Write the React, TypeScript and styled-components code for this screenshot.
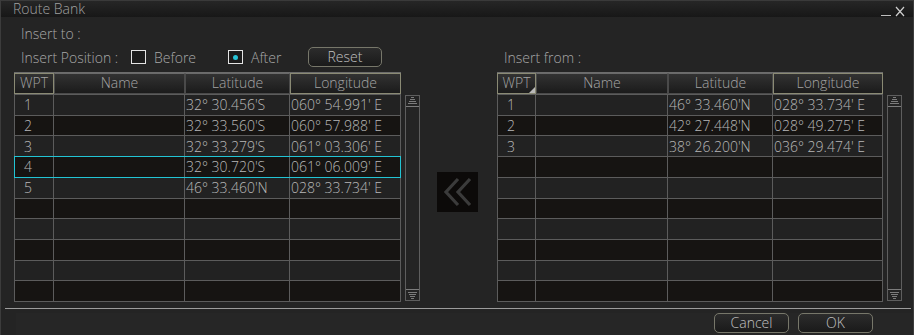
import React from "react";
import styled, { createGlobalStyle } from "styled-components";

const GlobalStyle = createGlobalStyle`
  html, body {
    margin: 0;
    padding: 0;
    background: #1a1a1a;
  }
  body {
    font-family: "Open Sans", "Noto Sans", sans-serif;
  }
`;

type Waypoint = { wpt: number; name: string; lat: string; lon: string };

const targetRoute: Waypoint[] = [
  { wpt: 1, name: "", lat: "32° 30.456'S", lon: "060° 54.991' E" },
  { wpt: 2, name: "", lat: "32° 33.560'S", lon: "060° 57.988' E" },
  { wpt: 3, name: "", lat: "32° 33.279'S", lon: "061° 03.306' E" },
  { wpt: 4, name: "", lat: "32° 30.720'S", lon: "061° 06.009' E" },
  { wpt: 5, name: "", lat: "46° 33.460'N", lon: "028° 33.734' E" },
];

const sourceRoute: Waypoint[] = [
  { wpt: 1, name: "", lat: "46° 33.460'N", lon: "028° 33.734' E" },
  { wpt: 2, name: "", lat: "42° 27.448'N", lon: "028° 49.275' E" },
  { wpt: 3, name: "", lat: "38° 26.200'N", lon: "036° 29.474' E" },
];

const ROWS = 10;

const Window = styled.div`
  width: 914px;
  height: 335px;
  box-sizing: border-box;
  background: #242424;
  border-left: 1px solid #3c3c3c;
  border-right: 1px solid #3c3c3c;
  display: flex;
  flex-direction: column;
  color: #ababab;
  font-size: 14px;
  font-weight: 300;
`;

const TitleBar = styled.div`
  height: 17px;
  flex-shrink: 0;
  display: flex;
  align-items: center;
  justify-content: space-between;
  padding: 0 8px 0 12px;
  background: linear-gradient(#262626, #171717);
  border-top: 1px solid #3a3a3a;
  box-sizing: border-box;
`;

const Title = styled.span`
  color: #a0a0a0;
  font-size: 14px;
  line-height: 16px;
`;

const WinControls = styled.div`
  display: flex;
  align-items: flex-end;
  gap: 4px;
  height: 16px;
`;

const Content = styled.div`
  display: flex;
  align-items: flex-end;
  padding: 8px 0 0 13px;
`;

const Side = styled.div`
  display: flex;
  flex-direction: column;
`;

const Label = styled.div`
  height: 18px;
  line-height: 18px;
  padding-left: 7px;
  color: #a8a8a8;
  white-space: nowrap;
`;

const PositionRow = styled.div`
  display: flex;
  align-items: center;
  height: 20px;
  margin-top: 4px;
  padding-left: 7px;
  color: #a8a8a8;
  white-space: nowrap;
`;

const RowCaption = styled.span`
  width: 110px;
`;

const Check = styled.span<{ $checked?: boolean }>`
  width: 15px;
  height: 14px;
  box-sizing: border-box;
  border: 1px solid #e4e4e4;
  background: #1c1c1c;
  display: inline-flex;
  align-items: center;
  justify-content: center;
  margin-right: 8px;
  &::after {
    content: "";
    width: 5px;
    height: 5px;
    border-radius: 50%;
    background: #27c3d6;
    display: ${(p) => (p.$checked ? "block" : "none")};
  }
`;

const Option = styled.label<{ $width: number }>`
  display: inline-flex;
  align-items: center;
  width: ${(p) => p.$width}px;
`;

const PushButton = styled.button<{ $width: number }>`
  width: ${(p) => p.$width}px;
  height: 20px;
  box-sizing: border-box;
  border: 1px solid #77776a;
  border-radius: 5px;
  background: linear-gradient(#2c2c2c, #1a1a1a);
  color: #c0c0c0;
  font-family: "Open Sans", "Noto Sans", sans-serif;
  font-size: 14px;
  font-weight: 300;
  line-height: 16px;
  padding: 0;
`;

const TableArea = styled.div`
  display: flex;
  margin-top: 5px;
`;

const Grid = styled.div`
  display: flex;
  flex-direction: column;
`;

const HeaderRow = styled.div<{ $cols: string }>`
  display: grid;
  grid-template-columns: ${(p) => p.$cols};
  height: 21px;
  border-top: 1px solid #6c6c6c;
  background: #161616;
`;

const HeaderCell = styled.div<{ $accent?: boolean }>`
  position: relative;
  box-sizing: border-box;
  border: 1px solid ${(p) => (p.$accent ? "#8a8a74" : "#4a4a4a")};
  border-top-color: ${(p) => (p.$accent ? "#8a8a74" : "#6a6a6a")};
  background: linear-gradient(#323232, #1b1b1b);
  color: #a4a4a4;
  text-align: center;
  line-height: 18px;
  overflow: hidden;
`;

const SortMark = styled.span`
  position: absolute;
  right: 0;
  bottom: 0;
  width: 0;
  height: 0;
  border-left: 6px solid transparent;
  border-bottom: 6px solid #b8b8b8;
`;

const Body = styled.div`
  display: grid;
  grid-template-rows: repeat(${ROWS}, 1fr);
  height: 208px;
  box-sizing: border-box;
  border-top: 1px solid #5c5c5c;
`;

const Row = styled.div<{ $cols: string; $dark: boolean; $selected?: boolean }>`
  position: relative;
  display: grid;
  grid-template-columns: ${(p) => p.$cols};
  border-left: 1px solid #5c5c5c;
  background: ${(p) => (p.$dark ? "#161412" : "#222222")};
  &::after {
    content: "";
    display: ${(p) => (p.$selected ? "block" : "none")};
    position: absolute;
    left: -1px;
    right: 0;
    top: -1px;
    bottom: 0;
    border: 1px solid #22c4d4;
    pointer-events: none;
  }
`;

const Cell = styled.div<{ $pad: number }>`
  box-sizing: border-box;
  border-right: 1px solid #5c5c5c;
  border-bottom: 1px solid #5c5c5c;
  padding-left: ${(p) => p.$pad}px;
  color: #b8b8b8;
  font-size: 14px;
  display: flex;
  align-items: center;
  white-space: nowrap;
  overflow: hidden;
`;

const ScrollTrack = styled.div<{ $gap: number }>`
  width: 15px;
  height: 206px;
  box-sizing: border-box;
  margin-left: ${(p) => p.$gap}px;
  margin-top: 23px;
  border: 1px solid #5e5e5e;
  display: flex;
  flex-direction: column;
  justify-content: space-between;
  align-items: center;
`;

const TransferButton = styled.button`
  width: 41px;
  height: 40px;
  margin: 0 19px 90px 17px;
  padding: 0;
  border: none;
  background: #0c0a09;
  display: flex;
  align-items: center;
  justify-content: center;
`;

const Separator = styled.div`
  height: 1px;
  margin: 6px 2px 0 4px;
  background: #9c9c9c;
`;

const Footer = styled.div`
  flex: 1;
  margin: 4px 0 0 15px;
  display: flex;
  justify-content: flex-end;
  align-items: flex-start;
  gap: 9px;
  padding-right: 40px;
  background: #262626;
`;

const ArrowMark = ({ down }: { down?: boolean }) => (
  <svg width="13" height="12" viewBox="0 0 13 12" style={{ transform: down ? "scaleY(-1)" : undefined }}>
    <g stroke="#7c7c7c" strokeWidth="1">
      <line x1="5" y1="1.5" x2="8" y2="1.5" />
      <line x1="4" y1="3.5" x2="9" y2="3.5" />
      <line x1="3" y1="5.5" x2="10" y2="5.5" />
      <line x1="2" y1="7.5" x2="11" y2="7.5" />
      <line x1="0" y1="10.5" x2="13" y2="10.5" />
    </g>
  </svg>
);

function ScrollBar({ gap }: { gap: number }) {
  return (
    <ScrollTrack $gap={gap}>
      <ArrowMark />
      <ArrowMark down />
    </ScrollTrack>
  );
}

function RouteTable({
  cols,
  data,
  selected,
  sortMark,
}: {
  cols: number[];
  data: Waypoint[];
  selected?: number;
  sortMark?: boolean;
}) {
  const template = cols.map((c) => `${c}px`).join(" ");
  const rows = Array.from({ length: ROWS }, (_, i) => data[i]);
  return (
    <Grid>
      <HeaderRow $cols={`${cols[0] + 1}px ${cols.slice(1).map((c) => `${c}px`).join(" ")}`}>
        <HeaderCell $accent>
          WPT
          {sortMark && <SortMark />}
        </HeaderCell>
        <HeaderCell>Name</HeaderCell>
        <HeaderCell>Latitude</HeaderCell>
        <HeaderCell $accent>Longitude</HeaderCell>
      </HeaderRow>
      <Body>
        {rows.map((wp, i) => (
          <Row key={i} $cols={template} $dark={i % 2 === 1} $selected={selected === i}>
            <Cell $pad={9}>{wp?.wpt}</Cell>
            <Cell $pad={2}>{wp?.name}</Cell>
            <Cell $pad={1}>{wp?.lat}</Cell>
            <Cell $pad={1}>{wp?.lon}</Cell>
          </Row>
        ))}
      </Body>
    </Grid>
  );
}

export default function App() {
  return (
    <>
      <GlobalStyle />
      <Window>
        <TitleBar>
          <Title>Route Bank</Title>
          <WinControls>
            <svg width="10" height="12" viewBox="0 0 10 12">
              <line x1="0" y1="10.5" x2="10" y2="10.5" stroke="#bdbdbd" strokeWidth="1" />
            </svg>
            <svg width="10" height="12" viewBox="0 0 10 12">
              <path d="M1 2 L9 11 M9 2 L1 11" stroke="#cfcfcf" strokeWidth="1.2" />
            </svg>
          </WinControls>
        </TitleBar>
        <Content>
          <Side>
            <Label>Insert to :</Label>
            <PositionRow>
              <RowCaption>Insert Position :</RowCaption>
              <Option $width={97}>
                <Check />
                Before
              </Option>
              <Option $width={80}>
                <Check $checked />
                After
              </Option>
              <PushButton $width={74}>Reset</PushButton>
            </PositionRow>
            <TableArea>
              <RouteTable cols={[39, 131, 105, 111]} data={targetRoute} selected={3} />
              <ScrollBar gap={4} />
            </TableArea>
          </Side>
          <TransferButton aria-label="Insert">
            <svg width="32" height="30" viewBox="0 0 32 30">
              <path
                d="M16 2 L4 15 L16 28 M28 2 L16 15 L28 28"
                fill="none"
                stroke="#3b3b3b"
                strokeWidth="3.2"
              />
            </svg>
          </TransferButton>
          <Side>
            <Label>Insert from :</Label>
            <TableArea>
              <RouteTable cols={[38, 132, 105, 110]} data={sourceRoute} sortMark />
              <ScrollBar gap={4} />
            </TableArea>
          </Side>
        </Content>
        <Separator />
        <Footer>
          <PushButton $width={75}>Cancel</PushButton>
          <PushButton $width={75}>OK</PushButton>
        </Footer>
      </Window>
    </>
  );
}
